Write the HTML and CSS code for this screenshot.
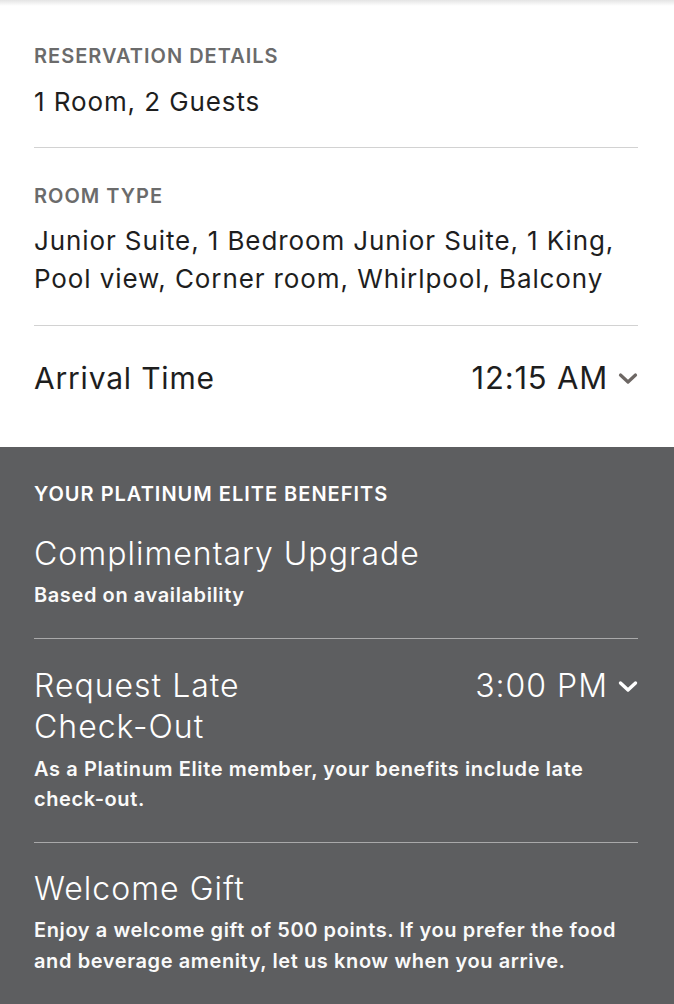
FILE: index.html
```html
<!DOCTYPE html>
<html lang="en">
<head>
<meta charset="utf-8">
<title>Reservation</title>
<link rel="stylesheet" href="styles.css">
</head>
<body>
<div class="page">
  <section class="details">
    <div class="block first">
      <div class="label">RESERVATION DETAILS</div>
      <div class="value">1 Room, 2 Guests</div>
    </div>
    <div class="block second">
      <div class="label">ROOM TYPE</div>
      <div class="value">Junior Suite, 1 Bedroom Junior Suite, 1 King, Pool view, Corner room, Whirlpool, Balcony</div>
    </div>
    <div class="row">
      <div class="row-title">Arrival Time</div>
      <div class="select">
        <span>12:15 AM</span>
        <svg class="chev" width="20" height="14" viewBox="0 0 20 14"><path d="M2.5 4 L10 11 L17.5 4" fill="none" stroke="currentColor" stroke-width="3.2" stroke-linecap="round" stroke-linejoin="round"/></svg>
      </div>
    </div>
  </section>
  <section class="benefits">
    <div class="label light">YOUR PLATINUM ELITE BENEFITS</div>
    <div class="benefit b1">
      <div class="b-title">Complimentary Upgrade</div>
      <div class="b-desc">Based on availability</div>
    </div>
    <div class="benefit b2">
      <div class="b-head">
        <div class="b-title narrow">Request Late Check-Out</div>
        <div class="select light-select">
          <span>3:00 PM</span>
          <svg class="chev" width="20" height="14" viewBox="0 0 20 14"><path d="M2.5 4 L10 11 L17.5 4" fill="none" stroke="currentColor" stroke-width="3.4" stroke-linecap="round" stroke-linejoin="round"/></svg>
        </div>
      </div>
      <div class="b-desc">As a Platinum Elite member, your benefits include late check-out.</div>
    </div>
    <div class="benefit b3">
      <div class="b-title">Welcome Gift</div>
      <div class="b-desc">Enjoy a welcome gift of 500 points. If you prefer the food and beverage amenity, let us know when you arrive.</div>
    </div>
  </section>
</div>
</body>
</html>
```
FILE: styles.css
```css
html, body {
  margin: 0;
  padding: 0;
  background: #5d5e60;
}
body {
  font-family: Inter, "Open Sans", sans-serif;
  -webkit-font-smoothing: antialiased;
}
.page {
  width: 674px;
  min-height: 1004px;
  background: #5d5e60;
}
.details {
  background: #fff;
  padding: 0 36px 0 34px;
  background-image: linear-gradient(#e4e4e4, #fff 6px);
}
.block {
  border-bottom: 1px solid #d2d2d2;
}
.block.first {
  padding: 44px 0 26px;
}
.block.second {
  padding: 36px 0 27px;
}
.label {
  font-size: 20px;
  font-weight: 600;
  color: #6b6b6b;
  line-height: 24px;
  letter-spacing: 1px;
}
.value {
  margin-top: 15px;
  font-size: 26px;
  color: #1e1e1e;
  line-height: 38px;
  letter-spacing: 0.9px;
}
.block.second .value {
  margin-top: 14px;
}
.row {
  display: flex;
  justify-content: space-between;
  align-items: center;
  padding: 32px 0 49px;
  line-height: 40px;
}
.row-title {
  font-size: 30px;
  color: #1e1e1e;
  letter-spacing: 0.8px;
}
.select {
  display: flex;
  align-items: center;
  gap: 10px;
  font-size: 31px;
  letter-spacing: 0.8px;
  color: #1e1e1e;
}
.select .chev {
  color: #6d6764;
}
.benefits {
  padding: 35px 36px 30px 34px;
  color: #fff;
}
.label.light {
  color: #fff;
}
.benefit {
  border-bottom: 1px solid #a9a9aa;
}
.benefit.b1 {
  padding: 27px 0 28px;
}
.benefit.b2 {
  padding: 26px 0 28px;
}
.benefit.b3 {
  padding: 25px 0 0;
  border-bottom: none;
}
.b-head {
  display: flex;
  justify-content: space-between;
  align-items: flex-start;
}
.b-title {
  font-size: 32px;
  font-weight: 300;
  line-height: 42px;
  letter-spacing: 1px;
}
.b2 .b-title {
  line-height: 41px;
}
.b-title.narrow {
  width: 250px;
}
.b-desc {
  margin-top: 5px;
  font-size: 20px;
  font-weight: 600;
  line-height: 30px;
  letter-spacing: 0.6px;
  color: #fafafa;
}
.b2 .b-desc {
  margin-top: 7px;
}
.b3 .b-desc {
  line-height: 31px;
}
.light-select {
  color: #fff;
  font-size: 32px;
  font-weight: 300;
  letter-spacing: 1px;
  line-height: 42px;
}
.light-select .chev {
  color: #fff;
}
```
